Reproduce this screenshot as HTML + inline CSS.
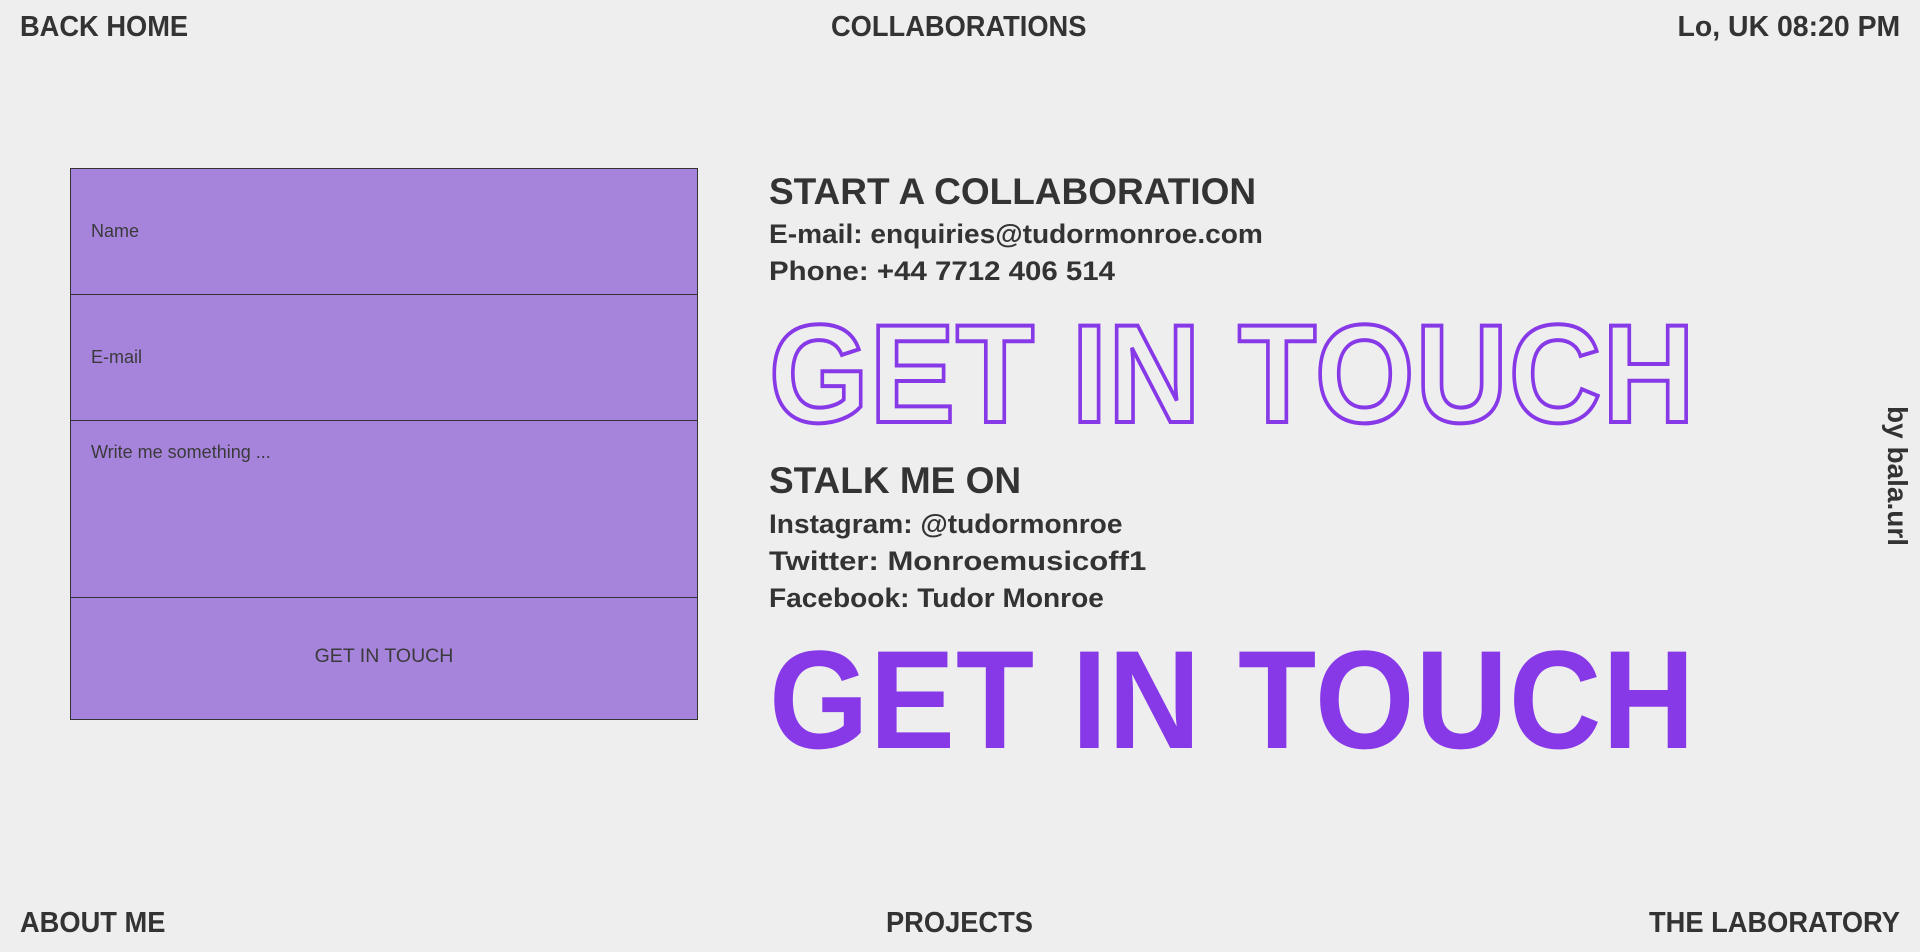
<!DOCTYPE html>
<html><head><meta charset="utf-8"><style>
html,body{margin:0;padding:0;width:1920px;height:952px;background:#eeeeee;overflow:hidden;font-family:"Liberation Sans",sans-serif;color:#333}
.t{position:absolute;line-height:1;white-space:nowrap;font-weight:bold;transform-origin:left top}
.nav{font-size:29px;transform:scaleX(0.94)}
.form{position:absolute;left:70px;top:168px;width:626px;height:550px;border:1px solid #333;background:#a784dc}
.row{position:absolute;left:0;width:626px;border-bottom:1px solid #333}
.ph{position:absolute;left:20px;font-size:18px;color:#3a3a3a;line-height:1;font-weight:normal}
.big{font-size:140px;transform:scaleX(0.915);letter-spacing:1px}
</style></head><body>
<div class="t nav" style="left:20px;top:13px">BACK HOME</div>
<div class="t nav" style="left:831px;top:13px">COLLABORATIONS</div>
<div class="t nav" style="right:20px;top:13px;transform-origin:right top;transform:scaleX(0.98)">Lo, UK 08:20 PM</div>
<div class="t nav" style="left:20px;top:909px">ABOUT ME</div>
<div class="t nav" style="left:886px;top:909px">PROJECTS</div>
<div class="t nav" style="right:20px;top:909px;transform-origin:right top">THE LABORATORY</div>

<div class="form">
 <div class="row" style="top:0;height:125px"><div class="ph" style="top:53px">Name</div></div>
 <div class="row" style="top:126px;height:125px"><div class="ph" style="top:53px">E-mail</div></div>
 <div class="row" style="top:252px;height:176px"><div class="ph" style="top:22px">Write me something ...</div></div>
 <div class="ph" style="left:0;width:626px;text-align:center;top:478px;font-size:19.5px">GET IN TOUCH</div>
</div>

<div class="t" style="left:769px;top:173px;font-size:37px;transform:scaleX(1.0)">START A COLLABORATION</div>
<div class="t" style="left:769px;top:221px;font-size:27px;transform:scaleX(1.04)">E-mail: enquiries@tudormonroe.com</div>
<div class="t" style="left:769px;top:258px;font-size:27px;transform:scaleX(1.09)">Phone: +44 7712 406 514</div>
<div class="t big" style="left:769px;top:304px;color:transparent;-webkit-text-stroke:4px #8739e8">GET IN TOUCH</div>
<div class="t" style="left:769px;top:462px;font-size:37px;transform:scaleX(1.0)">STALK ME ON</div>
<div class="t" style="left:769px;top:511px;font-size:27px;transform:scaleX(1.04)">Instagram: @tudormonroe</div>
<div class="t" style="left:769px;top:548px;font-size:27px;transform:scaleX(1.15)">Twitter: Monroemusicoff1</div>
<div class="t" style="left:769px;top:585px;font-size:27px;transform:scaleX(1.04)">Facebook: Tudor Monroe</div>
<div class="t big" style="left:769px;top:630px;color:#8739e8">GET IN TOUCH</div>
<div class="t" style="left:1883px;top:406px;font-size:28px;writing-mode:vertical-rl">by bala.url</div>
</body></html>
